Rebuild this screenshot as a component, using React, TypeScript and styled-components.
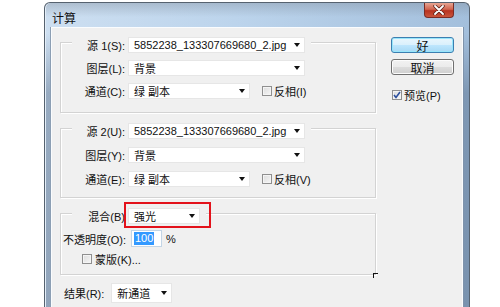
import styled, { createGlobalStyle } from "styled-components";

const GlobalStyle = createGlobalStyle`
  html, body {
    margin: 0;
    padding: 0;
    background: #fff;
    overflow: hidden;
  }
  body {
    font-family: "Liberation Sans", "Noto Sans CJK SC", sans-serif;
    font-size: 11px;
    color: #111;
  }
`;

const Page = styled.div`
  width: 500px;
  height: 307px;
  padding-top: 2px;
  box-sizing: border-box;
`;

const Window = styled.div`
  margin-left: 44px;
  width: 426px;
  box-sizing: border-box;
  border: 1px solid #56626f;
  border-bottom: none;
  border-radius: 6px 6px 0 0;
  padding: 0 6px;
  background: linear-gradient(
      to bottom,
      rgba(120, 132, 146, 0.35) 0px,
      rgba(255, 255, 255, 0) 14px
    ),
    linear-gradient(
      to bottom,
      rgba(70, 92, 120, 0) 0px,
      rgba(70, 92, 120, 0) 30px,
      rgba(70, 92, 120, 0.4) 90px,
      rgba(70, 92, 120, 0.45) 100%
    ),
    linear-gradient(to right, #cddff1 0%, #bcd4ec 45%, #a3bfdc 100%);
  box-shadow: inset 1px 0 0 #e4eef8;
`;

const TitleBar = styled.div`
  height: 24px;
  display: flex;
  align-items: flex-start;
  justify-content: space-between;
`;

const Title = styled.span`
  padding: 6px 0 0 1px;
  font-size: 12px;
  color: #111;
`;

const CloseButton = styled.div`
  width: 28px;
  height: 14px;
  margin-right: 9px;
  border: 1px solid #7a2c25;
  border-top: none;
  border-radius: 0 0 4px 4px;
  background: linear-gradient(to bottom, #e7a592 0%, #d0644f 45%, #b8331f 55%, #c9553c 100%);
  display: flex;
  align-items: center;
  justify-content: center;
`;

const Client = styled.div`
  display: flex;
  gap: 15px;
  padding: 9px 8px 12px;
  background: #f0f0f0;
  border: 1px solid #fafcfe;
  border-bottom: none;
  box-shadow: -1px 0 0 #8c9fb4, 1px 0 0 #7f93ab;
`;

const LeftCol = styled.div`
  width: 316px;
  display: flex;
  flex-direction: column;
`;

const RightCol = styled.div`
  width: 63px;
  display: flex;
  flex-direction: column;
`;

const Group = styled.div<{ $mt: number; $gap: number; $pb: number }>`
  position: relative;
  margin-top: ${(p) => p.$mt}px;
  border: 1px solid #d3d3d3;
  box-shadow: 1px 1px 0 #fff, inset 1px 1px 0 #fff;
  padding-bottom: ${(p) => p.$pb}px;
  display: flex;
  flex-direction: column;
  gap: ${(p) => p.$gap}px;
`;

const Legend = styled.div`
  align-self: flex-start;
  margin: -6px 0 0 11px;
  padding-right: 6px;
  background: #f0f0f0;
  display: flex;
  align-items: center;
  gap: 3px;
`;

const Row = styled.div<{ $pl?: number; $gap?: number; $h?: number }>`
  display: flex;
  align-items: center;
  padding-left: ${(p) => p.$pl ?? 0}px;
  gap: ${(p) => p.$gap ?? 3}px;
  height: ${(p) => p.$h ?? 16}px;
`;

const Label = styled.span<{ $w?: number }>`
  width: ${(p) => (p.$w ? `${p.$w}px` : "auto")};
  text-align: right;
  white-space: nowrap;
`;

const SelectBox = styled.div<{ $w: number; $h?: number }>`
  position: relative;
  width: ${(p) => p.$w}px;
  height: ${(p) => p.$h ?? 16}px;
  box-sizing: border-box;
  border: 1px solid #e6e6e6;
  background: #fff;
  display: flex;
  align-items: center;
  justify-content: space-between;
  padding: 0 4px 0 5px;
  white-space: nowrap;
`;

const Arrow = styled.span`
  width: 0;
  height: 0;
  border-left: 3.5px solid transparent;
  border-right: 3.5px solid transparent;
  border-top: 4px solid #111;
`;

const Highlight = styled.div`
  position: absolute;
  left: -5px;
  right: -12px;
  top: -7px;
  bottom: -5px;
  border: 2px solid #e3121b;
  pointer-events: none;
`;

const TextInput = styled.div`
  width: 31px;
  height: 17px;
  box-sizing: border-box;
  border: 1px solid #c3d5e6;
  background: #fff;
  display: flex;
  align-items: center;
  padding-left: 2px;
  margin-left: 1px;
`;

const Selected = styled.span`
  background: #3399ff;
  color: #fff;
  padding: 0 1px;
  line-height: 13px;
`;

const Box = styled.span`
  width: 10px;
  height: 10px;
  box-sizing: border-box;
  border: 1px solid #8f8f8f;
  background: linear-gradient(135deg, #dcdcdc 0%, #f6f6f6 100%);
  box-shadow: inset 0 0 0 1px #f4f4f4;
  display: inline-flex;
  align-items: center;
  justify-content: center;
  flex: none;
`;

const Button = styled.div<{ $primary?: boolean }>`
  height: 16px;
  box-sizing: border-box;
  border-radius: 3px;
  border: 1px solid ${(p) => (p.$primary ? "#3c7fb1" : "#707070")};
  background: ${(p) =>
    p.$primary
      ? "linear-gradient(to bottom, #eaf6fd 0%, #d9f0fc 50%, #bee6fd 51%, #a7d9f5 100%)"
      : "linear-gradient(to bottom, #f2f2f2 0%, #ebebeb 50%, #dddddd 51%, #cfcfcf 100%)"};
  box-shadow: ${(p) => (p.$primary ? "inset 0 0 0 1px #98e6fb" : "inset 0 0 0 1px #fcfcfc")};
  display: flex;
  align-items: center;
  justify-content: center;
  font-size: 12px;
  color: #111;
`;

const Grip = styled.div`
  position: absolute;
  right: -3px;
  bottom: -4px;
  width: 4px;
  height: 4px;
  border-top: 1px solid #111;
  border-left: 1px solid #111;
`;

const Checkbox = ({ checked }: { checked?: boolean }) => (
  <Box>
    {checked && (
      <svg width="8" height="8" viewBox="0 0 8 8">
        <path d="M1 4 L3 6.5 L7 1" fill="none" stroke="#2c4f9e" strokeWidth="1.6" />
      </svg>
    )}
  </Box>
);

const Select = ({ w, h, children }: { w: number; h?: number; children?: React.ReactNode }) => (
  <SelectBox $w={w} $h={h}>
    <span>{children}</span>
    <Arrow />
  </SelectBox>
);

const SourceGroup = ({
  mt,
  gap,
  pb,
  src,
  layer,
  channel,
  invert,
}: {
  mt: number;
  gap: number;
  pb: number;
  src: string;
  layer: string;
  channel: string;
  invert: string;
}) => (
  <Group $mt={mt} $gap={gap} $pb={pb}>
    <Legend>
      <Label $w={53}>{src}</Label>
      <Select w={177}>5852238_133307669680_2.jpg</Select>
    </Legend>
    <Row>
      <Label $w={64}>{layer}</Label>
      <Select w={177}>背景</Select>
    </Row>
    <Row>
      <Label $w={64}>{channel}</Label>
      <Select w={122}>绿 副本</Select>
      <Row $pl={9} $gap={2}>
        <Checkbox />
        <span>{invert}</span>
      </Row>
    </Row>
  </Group>
);

export default function App() {
  return (
    <Page>
      <GlobalStyle />
      <Window>
        <TitleBar>
          <Title>计算</Title>
          <CloseButton>
            <svg width="12" height="10" viewBox="0 0 12 10">
              <path d="M2 1 L10 9 M10 1 L2 9" stroke="#5a2018" strokeWidth="3.4" strokeLinecap="round" />
              <path d="M2 1 L10 9 M10 1 L2 9" stroke="#fff" strokeWidth="1.8" strokeLinecap="round" />
            </svg>
          </CloseButton>
        </TitleBar>
        <Client>
          <LeftCol>
            <SourceGroup mt={5} gap={7} pb={13} src="源 1(S):" layer="图层(L):" channel="通道(C):" invert="反相(I)" />
            <SourceGroup mt={15} gap={8} pb={10} src="源 2(U):" layer="图层(Y):" channel="通道(E):" invert="反相(V)" />
            <Group $mt={15} $gap={6} $pb={9}>
              <Legend>
                <Label $w={53}>混合(B)</Label>
                <SelectBox $w={72}>
                  <span>强光</span>
                  <Arrow />
                  <Highlight />
                </SelectBox>
              </Legend>
              <Row $gap={4} $h={17}>
                <Label $w={65}>不透明度(O):</Label>
                <TextInput>
                  <Selected>100</Selected>
                </TextInput>
                <span>%</span>
              </Row>
              <Row $pl={21} $gap={3} $h={12}>
                <Checkbox />
                <span>蒙版(K)...</span>
              </Row>
              <Grip />
            </Group>
            <Row $pl={4} $gap={7} $h={20} style={{ marginTop: 8 }}>
              <Label>结果(R):</Label>
              <Select w={61} h={20}>新通道</Select>
            </Row>
          </LeftCol>
          <RightCol>
            <Button $primary>好</Button>
            <Button style={{ marginTop: 6 }}>取消</Button>
            <Row $pl={1} $gap={2} $h={12} style={{ marginTop: 14 }}>
              <Checkbox checked />
              <span>预览(P)</span>
            </Row>
          </RightCol>
        </Client>
      </Window>
    </Page>
  );
}
